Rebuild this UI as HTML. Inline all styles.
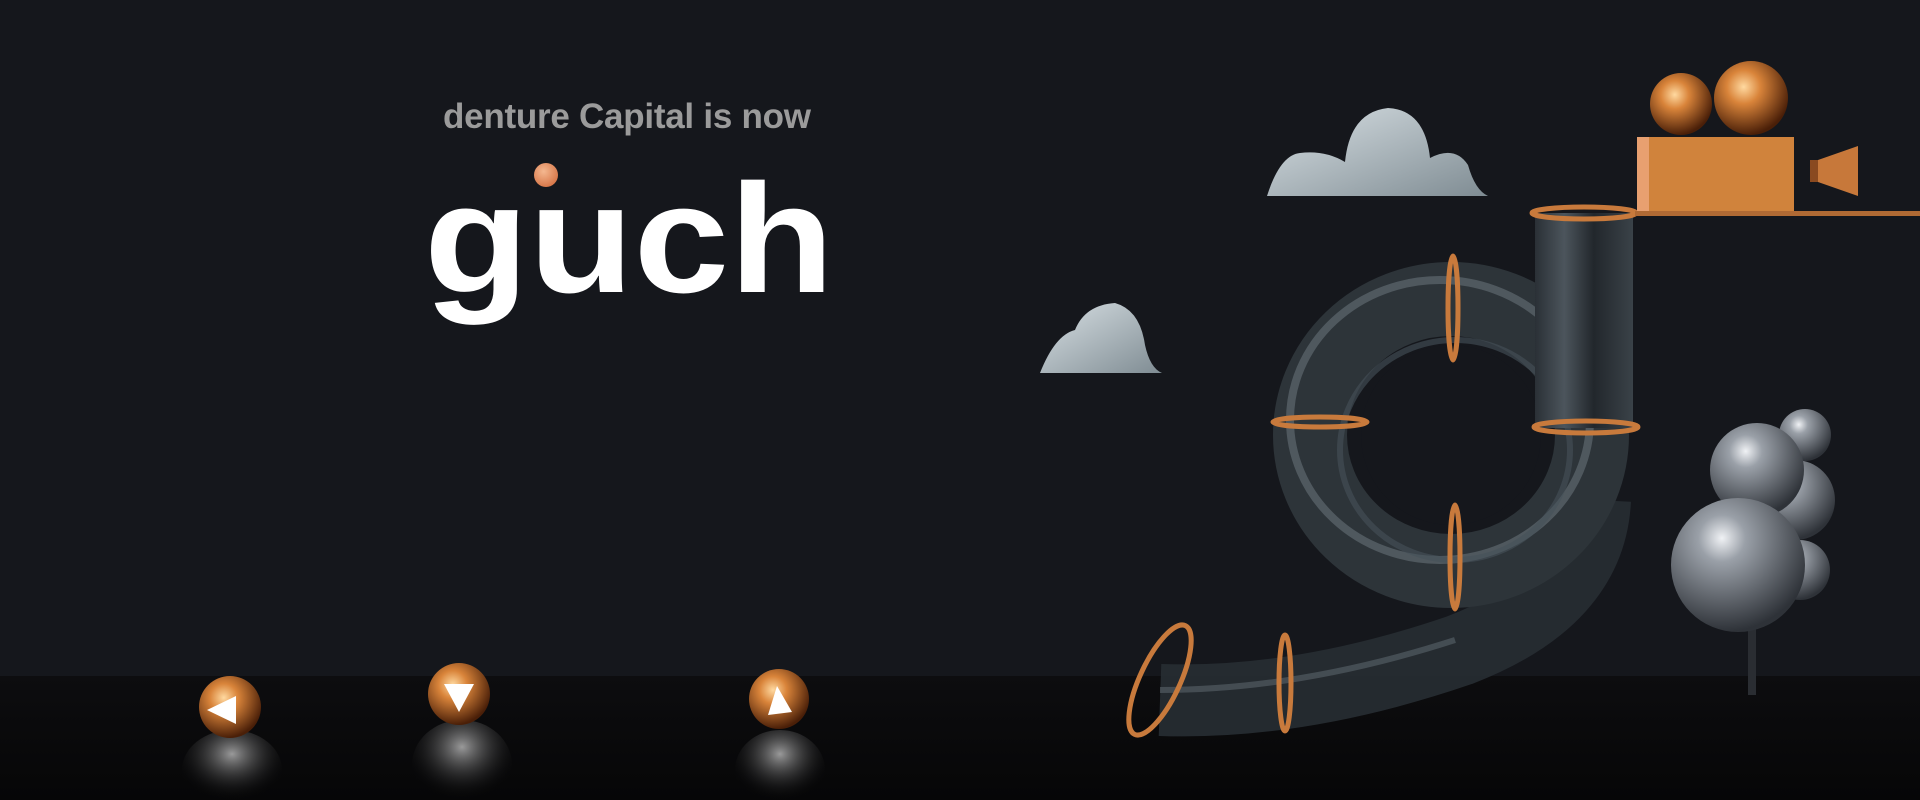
<!DOCTYPE html>
<html><head><meta charset="utf-8"><style>
html,body{margin:0;padding:0;background:#15171c;width:1920px;height:800px;overflow:hidden}
svg{display:block}
</style></head><body>
<svg width="1920" height="800" viewBox="0 0 1920 800" xmlns="http://www.w3.org/2000/svg">
<defs>
<radialGradient id="cu" cx="40%" cy="35%" r="65%"><stop offset="0" stop-color="#ffd9a0"/><stop offset="0.35" stop-color="#d9843a"/><stop offset="1" stop-color="#4a1f08"/></radialGradient>
<radialGradient id="dot" cx="40%" cy="35%" r="65%"><stop offset="0" stop-color="#f4b890"/><stop offset="1" stop-color="#d8784a"/></radialGradient>
<radialGradient id="sil" cx="38%" cy="30%" r="70%"><stop offset="0" stop-color="#f0f2f5"/><stop offset="0.25" stop-color="#9aa0a8"/><stop offset="1" stop-color="#2e3238"/></radialGradient>
<linearGradient id="cloud" x1="0" y1="0" x2="1" y2="1"><stop offset="0" stop-color="#d8e0e4"/><stop offset="1" stop-color="#7f8c93"/></linearGradient>
<linearGradient id="floor" x1="0" y1="0" x2="0" y2="1"><stop offset="0" stop-color="#0d0d0f"/><stop offset="1" stop-color="#060607"/></linearGradient>
<linearGradient id="pipeV" x1="0" y1="0" x2="1" y2="0"><stop offset="0" stop-color="#2a3036"/><stop offset="0.3" stop-color="#4c555c"/><stop offset="0.6" stop-color="#22272c"/><stop offset="1" stop-color="#3a4248"/></linearGradient>
<radialGradient id="glow" cx="50%" cy="30%" r="60%"><stop offset="0" stop-color="#d8d8d8" stop-opacity="0.7"/><stop offset="1" stop-color="#000" stop-opacity="0"/></radialGradient>
</defs>
<rect width="1920" height="800" fill="#15171c"/>
<rect y="676" width="1920" height="124" fill="url(#floor)"/>

<text x="443" y="128" font-family="Liberation Sans, sans-serif" font-weight="bold" font-size="35" fill="#9b9b9b" textLength="368">denture Capital is now</text>
<text x="424" y="292" font-family="Liberation Sans, sans-serif" font-weight="bold" font-size="155" fill="#fff" textLength="410" lengthAdjust="spacingAndGlyphs">guch</text>
<circle cx="546" cy="175" r="12" fill="url(#dot)"/>

<!-- balls -->
<g>
<ellipse cx="232" cy="770" rx="50" ry="40" fill="url(#glow)"/>
<ellipse cx="462" cy="765" rx="50" ry="45" fill="url(#glow)"/>
<ellipse cx="780" cy="770" rx="45" ry="40" fill="url(#glow)"/>
<circle cx="230" cy="707" r="31" fill="url(#cu)"/><path d="M207 710 L236 696 L236 724 Z" fill="#fff"/>
<circle cx="459" cy="694" r="31" fill="url(#cu)"/><path d="M444 684 L474 684 L459 712 Z" fill="#fff"/>
<circle cx="779" cy="699" r="30" fill="url(#cu)"/><path d="M768 715 L777 686 L792 712 Z" fill="#fff"/>
</g>

<!-- clouds -->
<path d="M1267 196 Q1280 155 1300 153 Q1325 150 1345 162 Q1350 112 1388 108 Q1425 110 1430 158 Q1455 145 1468 165 Q1475 190 1488 196 Z" fill="url(#cloud)"/>
<path d="M1040 373 Q1055 335 1075 330 Q1085 305 1115 303 Q1140 310 1145 345 Q1150 368 1162 373 Z" fill="url(#cloud)"/>

<!-- g pipe -->
<path d="M1160 700 Q1300 705 1460 650 Q1590 600 1595 500" fill="none" stroke="#262c32" stroke-width="72" stroke-linecap="butt" opacity="0.95"/>
<path d="M1160 690 Q1300 690 1455 640" fill="none" stroke="#5a646b" stroke-width="6" opacity="0.6"/>
<ellipse cx="1451" cy="435" rx="141" ry="136" fill="none" stroke="#2d3439" stroke-width="74"/>
<ellipse cx="1440" cy="420" rx="150" ry="140" fill="none" stroke="#6b767d" stroke-width="8" opacity="0.55"/>
<ellipse cx="1455" cy="450" rx="115" ry="110" fill="none" stroke="#46525a" stroke-width="6" opacity="0.6"/>
<ellipse cx="1451" cy="435" rx="90" ry="90" fill="#15171c"/>
<rect x="1535" y="213" width="98" height="215" fill="url(#pipeV)"/>
<ellipse cx="1584" cy="213" rx="52" ry="6" fill="none" stroke="#c87a3c" stroke-width="5"/>
<ellipse cx="1586" cy="427" rx="52" ry="6" fill="none" stroke="#c87a3c" stroke-width="5"/>
<ellipse cx="1320" cy="422" rx="47" ry="5" fill="none" stroke="#c87a3c" stroke-width="5"/>
<ellipse cx="1453" cy="308" rx="5" ry="52" fill="none" stroke="#c87a3c" stroke-width="5"/>
<ellipse cx="1455" cy="557" rx="5" ry="52" fill="none" stroke="#c87a3c" stroke-width="5"/>
<ellipse cx="1285" cy="683" rx="6" ry="48" fill="none" stroke="#c87a3c" stroke-width="5"/>
<ellipse cx="1160" cy="680" rx="20" ry="60" transform="rotate(25 1160 680)" fill="none" stroke="#c87a3c" stroke-width="5"/>

<!-- shelf -->
<rect x="1635" y="211" width="285" height="5" fill="#b06a34"/>
<rect x="1637" y="137" width="157" height="74" fill="#d0833c"/>
<rect x="1637" y="137" width="12" height="74" fill="#e8a070"/>
<path d="M1818 160 L1858 146 L1858 196 L1818 182 Z" fill="#c7783a"/>
<rect x="1810" y="160" width="8" height="22" fill="#8a4a20"/>
<circle cx="1681" cy="104" r="31" fill="url(#cu)"/>
<circle cx="1751" cy="98" r="37" fill="url(#cu)"/>

<!-- tree -->
<rect x="1748" y="600" width="8" height="95" fill="#2a2d32"/>
<circle cx="1805" cy="435" r="26" fill="url(#sil)"/>
<circle cx="1795" cy="500" r="40" fill="url(#sil)"/>
<circle cx="1800" cy="570" r="30" fill="url(#sil)"/>
<circle cx="1757" cy="470" r="47" fill="url(#sil)"/>
<circle cx="1738" cy="565" r="67" fill="url(#sil)"/>
</svg>
</body></html>
